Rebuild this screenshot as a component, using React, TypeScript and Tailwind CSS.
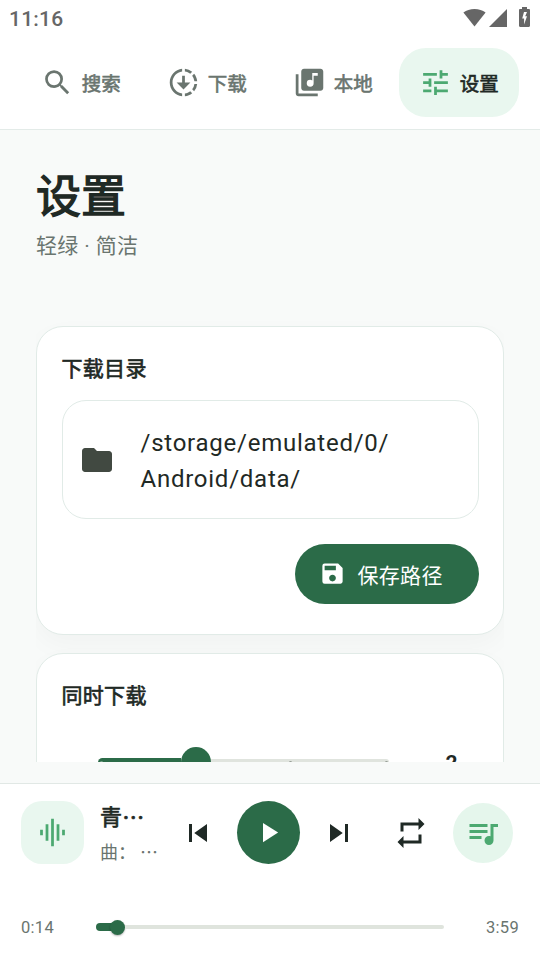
// ======================================================
// Music Player
// SettingsScreen
// ======================================================

import type { IconType } from "react-icons";
import {
    MdDownloading,
    MdFolder,
    MdGraphicEq,
    MdLibraryMusic,
    MdPlayArrow,
    MdQueueMusic,
    MdRepeat,
    MdSave,
    MdSearch,
    MdSkipNext,
    MdSkipPrevious,
    MdTune,
} from "react-icons/md";

interface NavItem {
    id: string;
    label: string;
    icon: IconType;
}

const navItems: NavItem[] = [
    { id: "search", label: "搜索", icon: MdSearch },
    { id: "download", label: "下载", icon: MdDownloading },
    { id: "local", label: "本地", icon: MdLibraryMusic },
    { id: "settings", label: "设置", icon: MdTune },
];

function StatusBar() {
    return (
        <div className="flex h-9 shrink-0 items-center justify-between pl-[9px] pr-[10px] text-[#666666]">
            <span className="text-[21px] font-medium leading-9 tracking-[0.2px] pt-[2px]">11:16</span>

            <div className="flex items-center pb-[2px]">
                <svg width="23" height="19" viewBox="0 0 23 19" fill="currentColor">
                    <path d="M11.5 18.5 0.4 4.6C3.4 2.2 7.2 0.9 11.5 0.9s8.1 1.3 11.1 3.7z" />
                </svg>
                <svg width="18" height="19" viewBox="0 0 18 19" fill="currentColor" className="ml-[3px]">
                    <path d="M18 1v18H0z" />
                </svg>
                <svg width="11" height="20" viewBox="0 0 11 20" fill="currentColor" className="ml-3">
                    <path
                        fillRule="evenodd"
                        d="M3 0h5v2h1.8c.7 0 1.2.5 1.2 1.2v15.6c0 .7-.5 1.2-1.2 1.2H1.2C.5 20 0 19.5 0 18.8V3.2C0 2.5.5 2 1.2 2H3zM5 5 3.2 11.5h1.900v6L8 9.300H6.200L8 5z"
                    />
                </svg>
            </div>
        </div>
    );
}

function TopNav({ active }: { active: string }) {
    return (
        <nav className="flex h-[94px] shrink-0 gap-1.5 border-b border-[#e3ebe8] px-[21px] pt-3">
            {navItems.map(({ id, label, icon: Icon }) => (
                <button
                    key={id}
                    className={
                        id === active
                            ? "flex h-[69px] w-[120px] items-center justify-center gap-[7.5px] rounded-[27px] bg-[#e9f7ef] text-[#1f2925]"
                            : "flex h-[69px] w-[120px] items-center justify-center gap-[7.5px] text-[#6a756f]"
                    }
                >
                    <Icon className={id === active ? "size-[33px] text-[#4ca971]" : "size-[33px]"} />
                    <span className="text-[19.5px] leading-7 pt-1 [-webkit-text-stroke:0.6px_currentColor]">{label}</span>
                </button>
            ))}
        </nav>
    );
}

function DownloadPathCard() {
    return (
        <section className="h-[309px] shrink-0 rounded-[27px] border border-[#e1ebe7] bg-white px-[24.5px] pt-[26px] shadow-[0_10px_27px_rgba(0,0,0,0.03)]">
            <h2 className="text-[21px] leading-8 tracking-[0.3px] [-webkit-text-stroke:0.65px_currentColor]">下载目录</h2>

            <div className="mt-[15px] flex h-[119px] items-center rounded-3xl border border-[#e1ebe7] pl-4">
                <MdFolder className="size-9 text-[#414941]" />
                <p className="ml-[26px] text-2xl leading-9 tracking-[0.75px] pt-[3px]">
                    /storage/emulated/0/
                    <br />
                    Android/data/
                </p>
            </div>

            <div className="mt-[24.5px] flex justify-end">
                <button className="flex h-[60px] w-[184px] items-center rounded-full bg-[#2b6b48] pl-6 text-white">
                    <MdSave className="size-[27px]" />
                    <span className="ml-3 text-[21px] leading-8 tracking-[0.3px] pt-1">保存路径</span>
                </button>
            </div>
        </section>
    );
}

function ConcurrencyCard() {
    return (
        <section className="h-[180px] shrink-0 rounded-[27px] border border-[#e1ebe7] bg-white px-[24.5px] pt-[26px] shadow-[0_10px_27px_rgba(0,0,0,0.03)]">
            <h2 className="text-[21px] leading-8 tracking-[0.3px] [-webkit-text-stroke:0.65px_currentColor]">同时下载</h2>

            <div className="mt-[35px] flex h-[30px] items-center pl-9">
                <div className="h-[9px] w-[83px] rounded-l-full bg-[#2b6b48] pl-[2px] pt-[3px]">
                    <div className="size-[3px] rounded-full bg-[#7ba48b]" />
                </div>
                <div className="size-[30px] rounded-full bg-[#2b6b48]" />
                <div className="flex h-1.5 w-[178px] items-center justify-between rounded-r-full bg-[#e0e4de] pl-[78px] pr-px">
                    <div className="size-[3px] rounded-full bg-[#959c95]" />
                    <div className="size-[3px] rounded-full bg-[#959c95]" />
                </div>
                <span className="ml-[57px] pt-px text-[21px] font-bold leading-[30px]">2</span>
            </div>
        </section>
    );
}

function PlayerBar() {
    return (
        <footer className="h-[177px] shrink-0 border-t border-[#e1e8e5] bg-white">
            <div className="flex h-[81px] items-center pl-[21px] pr-[27px] pt-[15px]">
                <div className="flex size-[63px] items-center justify-center rounded-[21px] bg-[#e9f7ef] text-[#4ca971]">
                    <MdGraphicEq className="size-[33px]" />
                </div>

                <div className="ml-4 w-[68px] whitespace-nowrap font-['Noto_Sans_CJK_SC',sans-serif]">
                    <div className="-mt-px text-[22px] leading-[34px] tracking-[0.3px] [-webkit-text-stroke:0.7px_currentColor]">青…</div>
                    <div className="mt-1 text-[18px] leading-[30px] text-[#6a756f]">曲： …</div>
                </div>

                <button className="mt-px flex size-[60px] items-center justify-center">
                    <MdSkipPrevious className="size-9" />
                </button>
                <button className="mx-[9px] flex size-[63px] items-center justify-center rounded-full bg-[#2b6b48] text-white">
                    <MdPlayArrow className="size-[33px]" />
                </button>
                <button className="mt-px flex size-[60px] items-center justify-center">
                    <MdSkipNext className="size-9" />
                </button>
                <button className="mx-3 mt-px flex size-[60px] items-center justify-center">
                    <MdRepeat className="size-9" />
                </button>
                <button className="mt-px flex size-[60px] items-center justify-center rounded-full bg-[#e5f6ec] text-[#4ca971]">
                    <MdQueueMusic className="size-9" />
                </button>
            </div>

            <div className="mt-[47px] flex h-[30px] items-center px-[21px] text-[16.5px] text-[#6a756f]">
                <span className="w-[75px] pt-[3px] tracking-[0.3px]">0:14</span>
                <div className="flex w-[348px] items-center">
                    <div className="-mr-1 h-2 w-[18px] rounded-l-full bg-[#2b6b48]" />
                    <div className="size-[15px] rounded-full bg-[#2b6b48] shadow-[0_1px_2px_rgba(0,0,0,0.3)]" />
                    <div className="h-1 flex-1 rounded-r-full bg-[#dfe4dd]" />
                </div>
                <span className="flex-1 pt-[3px] text-right tracking-[0.3px]">3:59</span>
            </div>
        </footer>
    );
}

export default function App() {
    return (
        <div className="flex h-[960px] w-[540px] flex-col overflow-hidden bg-white font-[Roboto,'Noto_Sans_CJK_SC',sans-serif] text-[#1f2925]">
            <StatusBar />
            <TopNav active="settings" />

            <main className="flex h-[653px] shrink-0 flex-col bg-[#f8faf9]">
                <div className="mx-9 flex h-[632px] flex-col overflow-hidden">
                    <h1 className="mt-[35px] shrink-0 text-[45px] leading-[66px] [-webkit-text-stroke:1.3px_currentColor]">设置</h1>
                    <p className="-mt-px shrink-0 text-[21px] leading-8 tracking-[0.35px] text-[#6a756f]">轻绿 · 简洁</p>

                    <div className="mt-16 flex shrink-0 flex-col gap-[18px]">
                        <DownloadPathCard />
                        <ConcurrencyCard />
                    </div>
                </div>
            </main>

            <PlayerBar />
        </div>
    );
}
